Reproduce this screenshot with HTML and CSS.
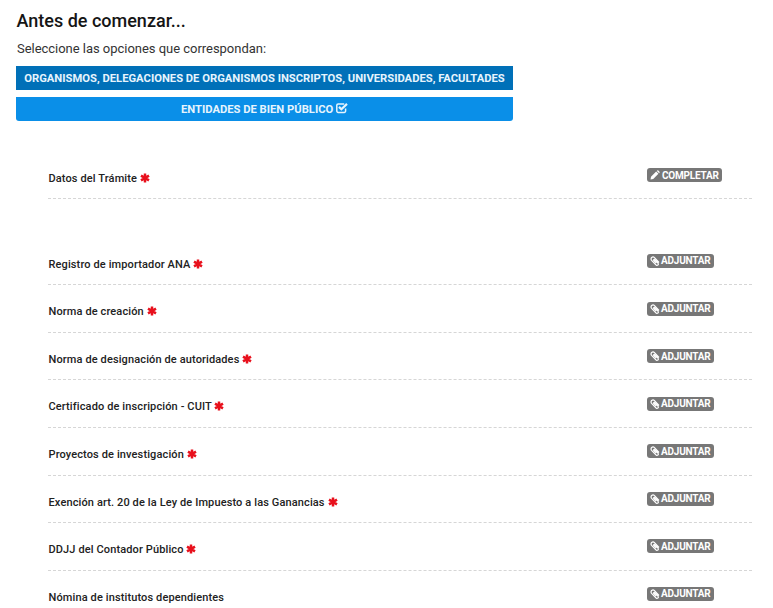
FILE: index.html
```html
<!DOCTYPE html>
<html lang="es">
<head>
<meta charset="utf-8">
<title>Antes de comenzar</title>
<link rel="stylesheet" href="styles.css">
</head>
<body>
<svg class="defs" width="0" height="0" aria-hidden="true">
  <symbol id="req" viewBox="0 0 12 12"><path d="M6 .5v11M1.2 3.2l9.6 5.6M1.2 8.8l9.6-5.6" fill="none" stroke="#e8101c" stroke-width="3"/></symbol>
  <symbol id="pencil" viewBox="0 0 12 12"><path d="M0.6 11.4l.6-3.3L7.4 1.9l2.7 2.7-6.2 6.2zM8.2 1.1l.5-.5a1 1 0 0 1 1.3 0l1.4 1.4a1 1 0 0 1 0 1.3l-.5.5z" fill="#fff"/></symbol>
  <symbol id="clip" viewBox="0 0 12 12"><path d="M10.8 7.8L5.4 2C4.5 1 3 .9 2 1.8s-1 2.4-.1 3.4l5.2 5.5c.6.7 1.6.8 2.3.2s.7-1.6.1-2.3L5.6 4.4c-.3-.4-.8-.4-1.1-.1s-.3.8 0 1.1l3 3.2" fill="none" stroke="#fff" stroke-width="1.4"/></symbol>
  <symbol id="check" viewBox="0 0 12 12"><path d="M9.6 6.6V9a1.4 1.4 0 0 1-1.4 1.4H2.2A1.4 1.4 0 0 1 .8 9V3.3a1.4 1.4 0 0 1 1.4-1.4h6" fill="none" stroke="#e6f4fd" stroke-width="1.5"/><path d="M3 4.9l2.4 2.4 5.6-5.4" fill="none" stroke="#e6f4fd" stroke-width="2.2"/></symbol>
</svg>
<main class="page">
  <h1 class="title">Antes de comenzar...</h1>
  <p class="lead">Seleccione las opciones que correspondan:</p>
  <div class="options">
    <button class="opt opt-dark">ORGANISMOS, DELEGACIONES DE ORGANISMOS INSCRIPTOS, UNIVERSIDADES, FACULTADES</button>
    <button class="opt opt-light">ENTIDADES DE BIEN PÚBLICO <svg class="ico-check"><use href="#check"/></svg></button>
  </div>
  <section class="list list-first">
    <div class="row">
      <span class="name">Datos del Trámite <svg class="req"><use href="#req"/></svg></span>
      <span class="badge"><svg class="ico"><use href="#pencil"/></svg>COMPLETAR</span>
    </div>
  </section>
  <section class="list list-second">
    <div class="row">
      <span class="name">Registro de importador ANA <svg class="req"><use href="#req"/></svg></span>
      <span class="badge"><svg class="ico"><use href="#clip"/></svg>ADJUNTAR</span>
    </div>
    <div class="row">
      <span class="name">Norma de creación <svg class="req"><use href="#req"/></svg></span>
      <span class="badge"><svg class="ico"><use href="#clip"/></svg>ADJUNTAR</span>
    </div>
    <div class="row">
      <span class="name">Norma de designación de autoridades <svg class="req"><use href="#req"/></svg></span>
      <span class="badge"><svg class="ico"><use href="#clip"/></svg>ADJUNTAR</span>
    </div>
    <div class="row">
      <span class="name">Certificado de inscripción - CUIT <svg class="req"><use href="#req"/></svg></span>
      <span class="badge"><svg class="ico"><use href="#clip"/></svg>ADJUNTAR</span>
    </div>
    <div class="row">
      <span class="name">Proyectos de investigación <svg class="req"><use href="#req"/></svg></span>
      <span class="badge"><svg class="ico"><use href="#clip"/></svg>ADJUNTAR</span>
    </div>
    <div class="row">
      <span class="name">Exención art. 20 de la Ley de Impuesto a las Ganancias <svg class="req"><use href="#req"/></svg></span>
      <span class="badge"><svg class="ico"><use href="#clip"/></svg>ADJUNTAR</span>
    </div>
    <div class="row">
      <span class="name">DDJJ del Contador Público <svg class="req"><use href="#req"/></svg></span>
      <span class="badge"><svg class="ico"><use href="#clip"/></svg>ADJUNTAR</span>
    </div>
    <div class="row">
      <span class="name">Nómina de institutos dependientes</span>
      <span class="badge"><svg class="ico"><use href="#clip"/></svg>ADJUNTAR</span>
    </div>
  </section>
</main>
</body>
</html>
```
FILE: styles.css
```css
html, body {
  margin: 0;
  padding: 0;
  height: 608px;
  overflow: hidden;
  background: #fff;
}
body {
  font-family: Roboto, "Liberation Sans", sans-serif;
  color: #222;
}
.defs { position: absolute; }
.page { padding: 10px 21px 0 16px; }
.title {
  margin: 0 0 0 0.5px;
  font-size: 18px;
  line-height: 22px;
  font-weight: 500;
  color: #151515;
}
.lead {
  margin: 9px 0 0 1px;
  font-size: 13px;
  line-height: 16px;
  letter-spacing: -0.03px;
  color: #333;
}
.options {
  width: 497px;
  margin-top: 9px;
  display: flex;
  flex-direction: column;
  gap: 7px;
}
.opt {
  display: block;
  width: 100%;
  height: 24px;
  padding: 0;
  border: 0;
  font-family: inherit;
  font-size: 11.22px;
  font-weight: 700;
  color: #e6f4fd;
  text-align: center;
}
.opt-dark { background: #0070b8; }
.opt-light { background: #0a8fe8; border-radius: 0 0 3px 3px; }
.ico-check { width: 12px; height: 12px; vertical-align: -1.5px; }
.list { margin-left: 32px; }
.list-first { margin-top: 33px; }
.list-second { margin-top: 38.7px; }
.row {
  height: 47.57px;
  box-sizing: border-box;
  border-bottom: 1px dashed #d6d6d6;
  display: grid;
  grid-template-columns: 1fr 105px;
  align-items: start;
}
.list-first .row { height: 45px; }
.name {
  margin: 20px 0 0 0.5px;
  font-size: 11px;
  line-height: 14px;
  font-weight: 500;
  color: #222;
  letter-spacing: 0.12px;
}
.list-first .name { margin-top: 18px; }
.req { width: 10px; height: 10px; vertical-align: -1px; }
.badge {
  justify-self: start;
  margin-top: 16.3px;
  height: 14px;
  box-sizing: border-box;
  padding: 0 3px;
  display: flex;
  align-items: center;
  gap: 1px;
  border-radius: 3px;
  background: #777;
  color: #fff;
  font-size: 10px;
  font-weight: 700;
  letter-spacing: -0.2px;
}
.list-first .badge { margin-top: 14px; padding-right: 3px; gap: 2px; }
.ico { width: 10px; height: 10px; }
```
